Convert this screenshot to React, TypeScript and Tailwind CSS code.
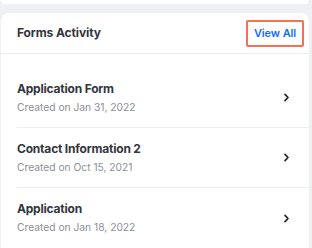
import React from "react";

// Forms shown in the activity list
const forms = [
  { title: "Application Form", created: "Created on Jan 31, 2022" },
  { title: "Contact Information 2", created: "Created on Oct 15, 2021" },
  { title: "Application", created: "Created on Jan 18, 2022" },
];

const Chevron = () => (
  <svg width="7" height="9" viewBox="0 0 7 9" fill="none">
    <path d="M2 1.3L5 4.5L2 7.7" stroke="#20242b" strokeWidth="1.7" strokeLinecap="round" strokeLinejoin="round" />
  </svg>
);

const App = () => {
  return (
    <div
      className="h-[248px] w-[312px] overflow-hidden bg-[#eef0f4] pr-[3px] pl-[1px]"
      style={{ fontFamily: "Inter, 'Liberation Sans', sans-serif" }}
    >
      {/* Bottom of the previous card */}
      <div className="h-[4px] rounded-b-md bg-white" />

      <div className="mt-[9px] rounded-t-lg bg-white">
        {/* Header */}
        <div className="flex h-[41px] items-center justify-between border-b border-[#eceef1] pl-4 pr-[5px]">
          <h3 className="text-[12px] font-bold tracking-[-0.1px] text-[#32363d]">Forms Activity</h3>
          <div className="flex h-[27px] w-[58px] items-center justify-center rounded-[2px] border-2 border-[#f7704f]">
            <span className="text-[11px] font-semibold tracking-[-0.1px] text-[#116dff]">View All</span>
          </div>
        </div>

        {/* Form rows */}
        <div className="pt-[14px] pl-4">
          {forms.map((form, i) => (
            <div
              key={form.title}
              className={`flex h-[60px] items-center justify-between pr-[19px] ${
                i < forms.length - 1 ? "border-b border-[#eceef1]" : ""
              }`}
            >
              <div className="flex flex-col">
                <span className="text-[12px] leading-[18px] font-bold tracking-[-0.2px] text-[#32363d]">
                  {form.title}
                </span>
                <span className="text-[10.25px] leading-[18px] text-[#8d9096]">{form.created}</span>
              </div>
              <Chevron />
            </div>
          ))}
        </div>
      </div>
    </div>
  );
};

export default App;
